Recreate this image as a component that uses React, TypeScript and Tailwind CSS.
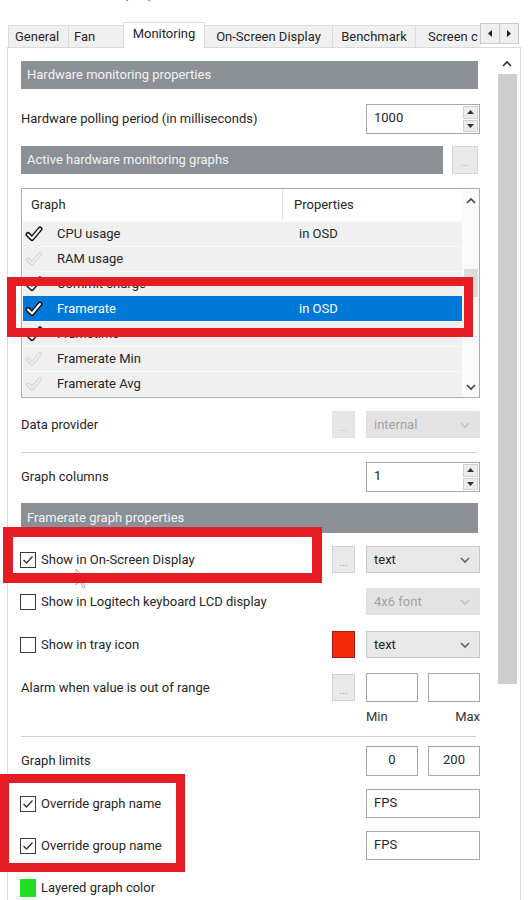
import React from "react";

const F = "font-['Roboto',sans-serif]";

function BoldCheck() {
  return (
    <svg width="18" height="16" viewBox="0 0 18 16">
      <path d="M3 8.5 L7 12.5 L15 3" fill="none" stroke="#111" strokeWidth="5" strokeLinecap="round" strokeLinejoin="round" />
      <path d="M3 8.5 L7 12.5 L15 3" fill="none" stroke="#fff" strokeWidth="2" strokeLinecap="round" strokeLinejoin="round" />
    </svg>
  );
}
function FaintCheck() {
  return (
    <svg width="18" height="16" viewBox="0 0 18 16">
      <path d="M3 8.5 L7 12.5 L15 3" fill="none" stroke="#d2d2d2" strokeWidth="4" strokeLinecap="round" strokeLinejoin="round" />
      <path d="M3 8.5 L7 12.5 L15 3" fill="none" stroke="#f0f0f0" strokeWidth="2" strokeLinecap="round" strokeLinejoin="round" />
    </svg>
  );
}

function Chevron({ up, color = "#555" }: { up?: boolean; color?: string }) {
  return (
    <svg width="12" height="8" viewBox="0 0 12 8">
      <path d={up ? "M2 6 L6 2 L10 6" : "M2 2 L6 6 L10 2"} fill="none" stroke={color} strokeWidth="1.6" />
    </svg>
  );
}

function Spin({ value }: { value: string }) {
  return (
    <div className="w-[114px] h-[30px] border border-[#a8a8a8] bg-white flex">
      <div className="flex-1 pl-[7px] pt-[3px] text-[#222]">{value}</div>
      <div className="w-[17px] flex flex-col gap-[1px] p-[1px]">
        <div className="flex-1 bg-[#ececec] border border-[#d0d0d0] flex items-center justify-center">
          <svg width="7" height="4" viewBox="0 0 7 4"><path d="M0 4 L3.5 0 L7 4Z" fill="#333" /></svg>
        </div>
        <div className="flex-1 bg-[#ececec] border border-[#d0d0d0] flex items-center justify-center">
          <svg width="7" height="4" viewBox="0 0 7 4"><path d="M0 0 L3.5 4 L7 0Z" fill="#333" /></svg>
        </div>
      </div>
    </div>
  );
}

function Dots({ disabled }: { disabled?: boolean }) {
  return (
    <div
      className={
        disabled
          ? "w-[23px] h-[27px] bg-[#e6e6e6] border border-[#e2e2e2] flex items-end justify-center pb-[4px] text-[10px] leading-none text-[#c4c4c4]"
          : "w-[23px] h-[27px] bg-[#e9e9e9] border border-[#cfcfcf] flex items-end justify-center pb-[4px] text-[10px] leading-none text-[#9a9a9a]"
      }
    >
      ...
    </div>
  );
}

function Select({ value, disabled }: { value: string; disabled?: boolean }) {
  return (
    <div
      className={
        disabled
          ? "w-[114px] h-[27px] bg-[#e3e3e3] border border-[#e0e0e0] flex items-center pl-[7px] pr-[8px] text-[#a3a3a3]"
          : "w-[114px] h-[27px] bg-[#e8e8e8] border border-[#c8c8c8] flex items-center pl-[7px] pr-[8px] text-[#222]"
      }
    >
      <span className="flex-1">{value}</span>
      <Chevron color={disabled ? "#c2c2c2" : "#666"} />
    </div>
  );
}

function Box({ checked }: { checked?: boolean }) {
  return (
    <div className="w-[16px] h-[16px] border border-[#3a3a3a] bg-white flex items-center justify-center">
      {checked && (
        <svg width="12" height="10" viewBox="0 0 12 10">
          <path d="M1.5 5 L4.5 8 L10.5 1.5" fill="none" stroke="#333" strokeWidth="1.3" />
        </svg>
      )}
    </div>
  );
}

function Header({ text, w, h }: { text: string; w: string; h: string }) {
  return (
    <div className={`${w} ${h} bg-[#8b9097] text-[#f2f2f2] flex items-center pl-[6px]`}>{text}</div>
  );
}

const rows: { name: string; prop?: string; on?: boolean; sel?: boolean }[] = [
  { name: "CPU usage", prop: "in OSD", on: true },
  { name: "RAM usage" },
  { name: "Commit charge", on: true },
  { name: "Framerate", prop: "in OSD", on: true, sel: true },
  { name: "Frametime", on: true },
  { name: "Framerate Min" },
  { name: "Framerate Avg" },
];

export default function App() {
  return (
    <div className={`${F} text-[13px] text-[#262626] w-[531px] h-[900px] bg-white overflow-hidden relative`}>
      {/* title remnants */}
      <div className="h-[22px] overflow-hidden relative">
        <div className="absolute left-[16px] top-[-17px] text-[15px] leading-[20px] text-[#666]">MSI Afterburner properties</div>
        <div className="absolute right-[6px] top-[-16px] text-[16px] leading-[20px] text-[#666]">×</div>
      </div>

      {/* tabs */}
      <div className="h-[25px] flex items-end pl-[8px] relative">
        <div className="h-[22px] w-[60px] pl-[6px] bg-[#f0f0f0] border-t border-l border-[#dcdcdc] flex items-center">General</div>
        <div className="h-[22px] w-[55px] pl-[5px] bg-[#f0f0f0] border-t border-l border-[#dcdcdc] flex items-center">Fan</div>
        <div className="h-[26px] w-[82px] bg-white border-t border-l border-r border-[#dcdcdc] flex items-start pt-[1px] justify-center mb-[-1px] relative z-10">Monitoring</div>
        <div className="h-[22px] w-[127px] bg-[#f0f0f0] border-t border-[#dcdcdc] flex items-center justify-center">On-Screen Display</div>
        <div className="h-[22px] w-[83px] bg-[#f0f0f0] border-t border-l border-[#dcdcdc] flex items-center justify-center">Benchmark</div>
        <div className="h-[22px] w-[66px] bg-[#f0f0f0] border-t border-l border-[#dcdcdc] flex items-center pl-[12px] overflow-hidden whitespace-nowrap">Screen c</div>
        <div className="absolute left-[480px] top-[1px] flex">
          <div className="w-[20px] h-[21px] bg-[#f0f0f0] border border-[#c9c9c9] flex items-center justify-center">
            <svg width="4" height="7" viewBox="0 0 4 7"><path d="M4 0 L0 3.5 L4 7Z" fill="#222" /></svg>
          </div>
          <div className="w-[19px] h-[21px] bg-[#f0f0f0] border border-l-0 border-[#c9c9c9] flex items-center justify-center">
            <svg width="4" height="7" viewBox="0 0 4 7"><path d="M0 0 L4 3.5 L0 7Z" fill="#222" /></svg>
          </div>
        </div>
      </div>

      {/* panel */}
      <div className="ml-[7px] w-[514px] h-[870px] border border-[#dadada] bg-white flex">
        <div className="w-[489px] pl-[13px] pt-[13px] flex flex-col">
          <Header text="Hardware monitoring properties" w="w-[457px]" h="h-[28px]" />

          <div className="mt-[15px] h-[30px] w-[459px] flex items-center justify-between">
            <span>Hardware polling period (in milliseconds)</span>
            <Spin value="1000" />
          </div>

          <div className="mt-[12px] h-[28px] w-[459px] flex items-stretch">
            <Header text="Active hardware monitoring graphs" w="w-[422px]" h="h-[28px]" />
            <div className="ml-[9px] w-[26px] h-[28px] bg-[#e9e9e9] border border-[#d6d6d6] flex items-end justify-center pb-[5px] text-[10px] leading-none text-[#b0b0b0]">...</div>
          </div>

          {/* list */}
          <div className="mt-[14px] h-[210px] w-[459px] border border-[#acacac] bg-white flex">
            <div className="w-[440px] flex flex-col">
              <div className="h-[32px] flex items-center">
                <div className="w-[261px] pl-[9px] h-full flex items-center border-r border-[#e4e4e4]">Graph</div>
                <div className="pl-[11px]">Properties</div>
              </div>
              {rows.map((r) => (
                <div
                  key={r.name}
                  className={
                    r.sel
                      ? "h-[25px] ml-[1px] bg-[#0078d7] text-white flex items-center"
                      : "h-[25px] ml-[1px] bg-[#f0f0f0] border-t border-[#f9f9f9] flex items-center"
                  }
                >
                  <div className="w-[34px] pl-[2px] flex items-center">{r.on ? <BoldCheck /> : <FaintCheck />}</div>
                  <div className="w-[242px]">{r.name}</div>
                  <div>{r.prop ?? ""}</div>
                </div>
              ))}
            </div>
            <div className="flex-1 flex flex-col items-center justify-between pt-[8px] pb-[6px] bg-[#fafafa]">
              <Chevron up color="#444" />
              <div className="w-[14px] h-[28px] bg-[#dcdcdc] mt-[64px]" />
              <div className="flex-1" />
              <Chevron color="#444" />
            </div>
          </div>

          <div className="mt-[13px] h-[27px] w-[459px] flex items-center">
            <span className="flex-1">Data provider</span>
            <Dots disabled />
            <div className="ml-[11px]"><Select value="internal" disabled /></div>
          </div>

          <div className="mt-[14px] h-[1px] w-[455px] bg-[#cfcfcf]" />

          <div className="mt-[9px] h-[30px] w-[459px] flex items-center justify-between">
            <span>Graph columns</span>
            <Spin value="1" />
          </div>

          <div className="mt-[11px]">
            <Header text="Framerate graph properties" w="w-[457px]" h="h-[30px]" />
          </div>

          <div className="mt-[13px] h-[27px] w-[459px] flex items-center">
            <div className="ml-[-1px] flex items-center gap-[5px] flex-1"><Box checked /><span>Show in On-Screen Display</span></div>
            <Dots />
            <div className="ml-[11px]"><Select value="text" /></div>
          </div>

          <div className="mt-[15px] h-[27px] w-[459px] flex items-center">
            <div className="ml-[-1px] flex items-center gap-[5px] flex-1"><Box /><span>Show in Logitech keyboard LCD display</span></div>
            <Select value="4x6 font" disabled />
          </div>

          <div className="mt-[16px] h-[27px] w-[459px] flex items-center">
            <div className="ml-[-1px] flex items-center gap-[5px] flex-1"><Box /><span>Show in tray icon</span></div>
            <div className="w-[23px] h-[27px] bg-[#f52a0a] border border-[#a81a10]" />
            <div className="ml-[11px]"><Select value="text" /></div>
          </div>

          <div className="mt-[15px] h-[29px] w-[459px] flex items-center">
            <span className="flex-1">Alarm when value is out of range</span>
            <Dots />
            <div className="ml-[11px] w-[52px] h-[29px] border border-[#a8a8a8] bg-white" />
            <div className="ml-[10px] w-[52px] h-[29px] border border-[#a8a8a8] bg-white" />
          </div>

          <div className="mt-[7px] h-[16px] w-[459px] flex items-center justify-end text-[#333]">
            <span className="w-[114px] flex justify-between"><span>Min</span><span>Max</span></span>
          </div>

          <div className="mt-[11px] h-[1px] w-[455px] bg-[#cfcfcf]" />

          <div className="mt-[9px] h-[30px] w-[459px] flex items-center">
            <span className="flex-1">Graph limits</span>
            <div className="w-[52px] h-[30px] border border-[#a8a8a8] bg-white flex items-start justify-center pt-[3px]">0</div>
            <div className="ml-[10px] w-[52px] h-[30px] border border-[#a8a8a8] bg-white flex items-start justify-center pt-[3px]">200</div>
          </div>

          <div className="mt-[13px] h-[29px] w-[459px] flex items-center">
            <div className="ml-[-1px] flex items-center gap-[5px] flex-1"><Box checked /><span>Override graph name</span></div>
            <div className="w-[114px] h-[29px] border border-[#a8a8a8] bg-white pl-[7px] pt-[3px]">FPS</div>
          </div>

          <div className="mt-[13px] h-[29px] w-[459px] flex items-center">
            <div className="ml-[-1px] flex items-center gap-[5px] flex-1"><Box checked /><span>Override group name</span></div>
            <div className="w-[114px] h-[29px] border border-[#a8a8a8] bg-white pl-[7px] pt-[3px]">FPS</div>
          </div>

          <div className="mt-[19px] h-[18px] flex items-center gap-[5px] ml-[-1px]">
            <div className="w-[16px] h-[18px] bg-[#22dd22]" />
            <span>Layered graph color</span>
          </div>
        </div>

        {/* page scrollbar */}
        <div className="w-[20px] flex flex-col items-center pt-[12px]">
          <Chevron up color="#333" />
          <div className="mt-[6px] w-[19px] h-[610px] bg-[#cdcdcd]" />
        </div>
      </div>

      {/* cursor */}
      <svg className="absolute left-[75px] top-[568px]" width="14" height="22" viewBox="0 0 14 22">
        <path d="M1 1 L1 17 L5 13 L8 20 L10 19 L7 12 L12 12 Z" fill="#f4f4f4" stroke="#b5b5b5" strokeWidth="1" />
      </svg>

      {/* red annotation boxes */}
      <div className="absolute left-[7px] top-[277px] w-[466px] h-[60px] border-[9px] border-[#e51c24]" />
      <div className="absolute left-[3px] top-[527px] w-[319px] h-[56px] border-[10px] border-[#e51c24]" />
      <div className="absolute left-[0px] top-[774px] w-[185px] h-[98px] border-[9px] border-[#e51c24]" />
    </div>
  );
}
